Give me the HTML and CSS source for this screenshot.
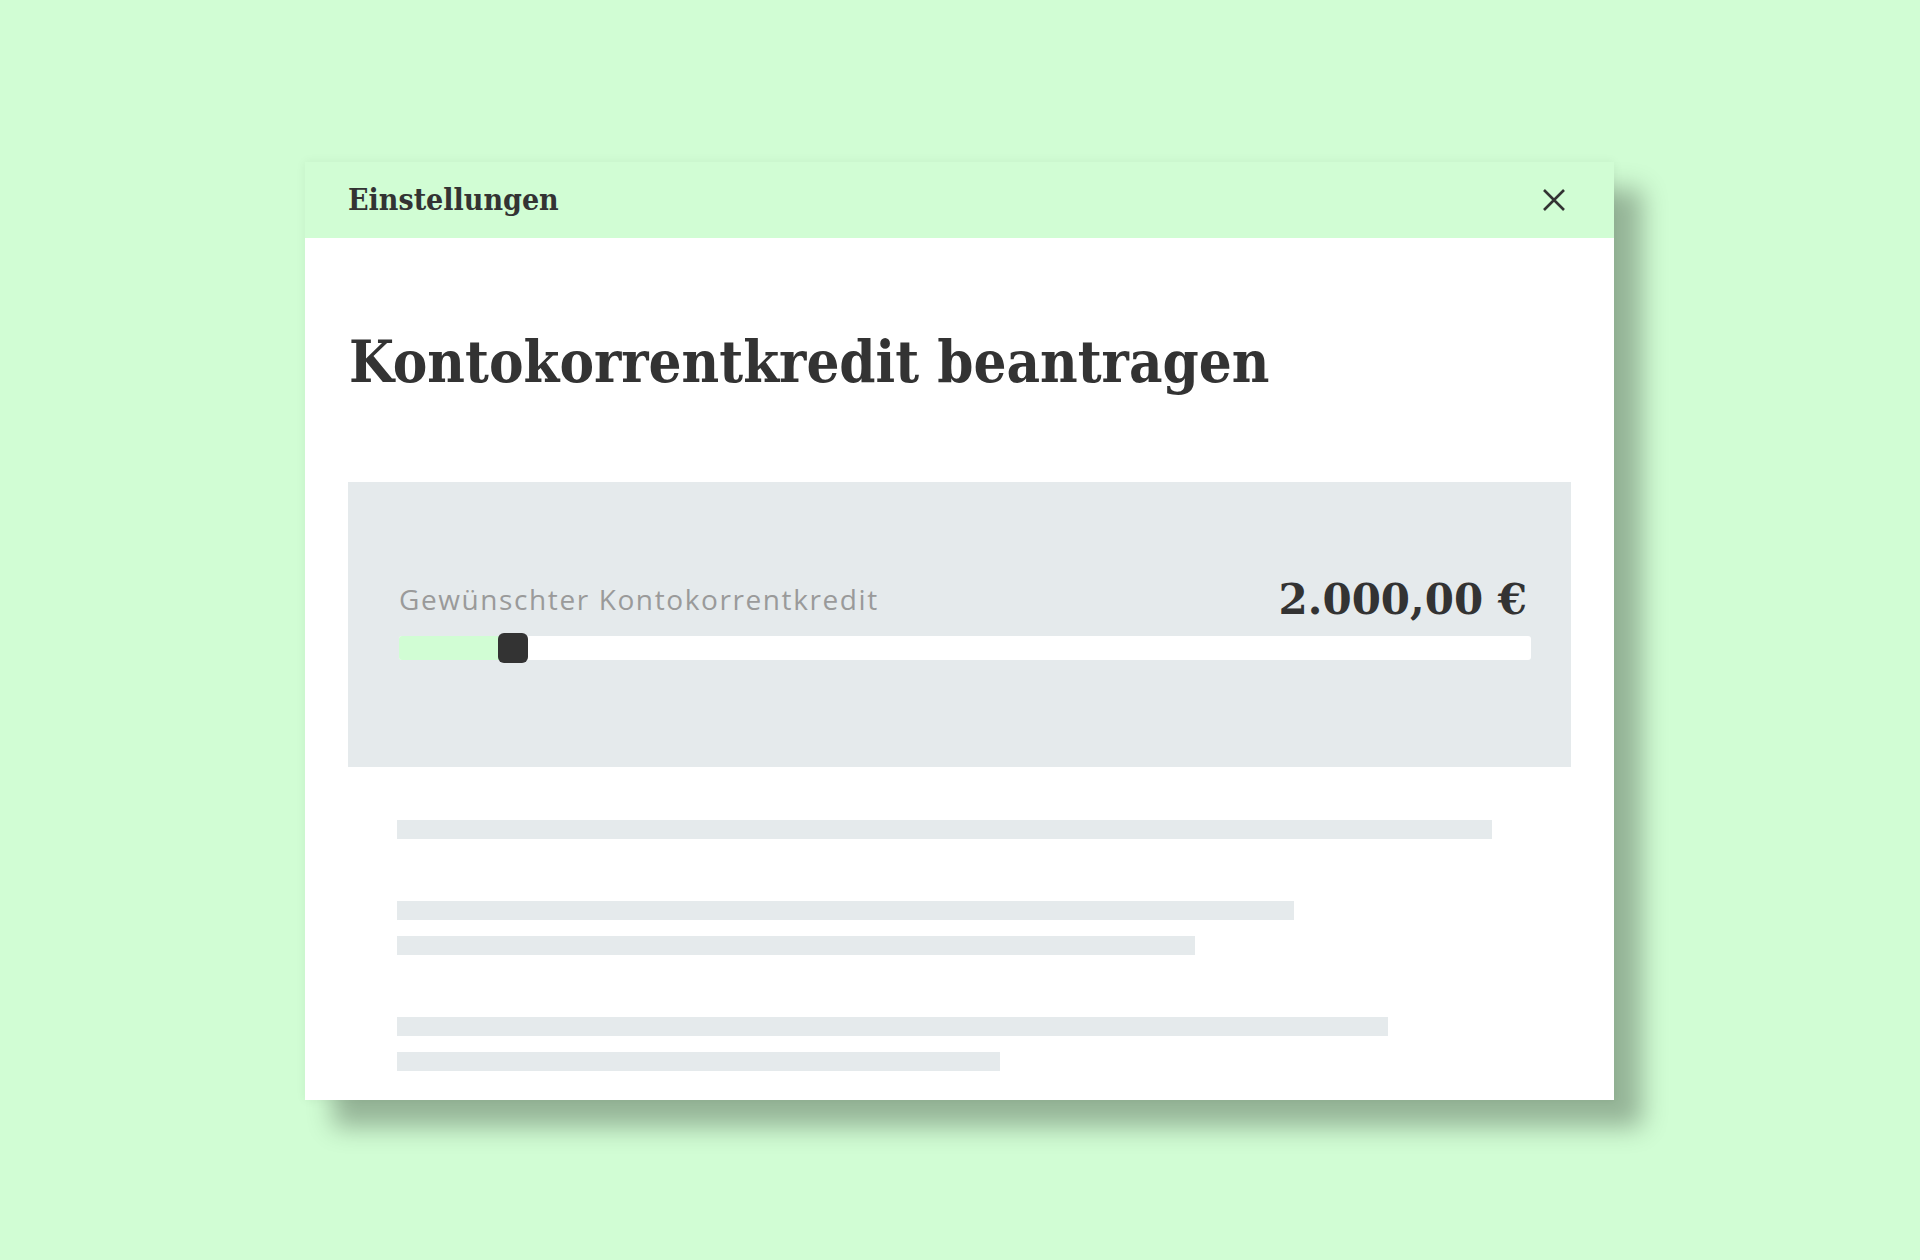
FILE: index.html
```html
<!DOCTYPE html>
<html lang="de">
<head>
<meta charset="utf-8">
<title>Einstellungen</title>
<link rel="stylesheet" href="styles.css">
</head>
<body>
<div class="modal">
  <div class="modal-header">
    <span class="modal-title">Einstellungen</span>
    <svg class="close" viewBox="0 0 24 24" width="24" height="24" aria-label="Schließen">
      <path d="M2 2 L22 22 M22 2 L2 22" stroke="#333" stroke-width="2.6" fill="none"/>
    </svg>
  </div>
  <div class="modal-body">
    <h1 class="page-title">Kontokorrentkredit beantragen</h1>
    <div class="slider-card">
      <div class="slider-row">
        <span class="slider-label">Gewünschter Kontokorrentkredit</span>
        <span class="slider-value">2.000,00 €</span>
      </div>
      <div class="track">
        <div class="fill" style="width: 101px"></div>
        <div class="thumb" style="left: 99px"></div>
      </div>
    </div>
    <div class="skeleton">
      <div class="group">
        <div class="bar" style="width: 1095px"></div>
      </div>
      <div class="group">
        <div class="bar" style="width: 897px"></div>
        <div class="bar" style="width: 798px"></div>
      </div>
      <div class="group">
        <div class="bar" style="width: 991px"></div>
        <div class="bar" style="width: 603px"></div>
      </div>
    </div>
  </div>
</div>
</body>
</html>
```

FILE: styles.css
```css
html, body {
  margin: 0;
  padding: 0;
}
body {
  background: #d1fdd4;
  width: 1920px;
  height: 1260px;
  overflow: hidden;
  font-family: "DejaVu Serif", serif;
  color: #333;
}
.modal {
  margin: 162px 0 0 305px;
  width: 1309px;
  height: 938px;
  background: #fff;
  box-shadow: 28px 27px 24px rgba(0, 0, 0, 0.29), 0 0 10px rgba(0, 0, 0, 0.06);
  display: flex;
  flex-direction: column;
}
.modal-header {
  height: 76px;
  background: #d1fdd4;
  display: flex;
  align-items: center;
  justify-content: space-between;
  padding: 0 48px 0 43px;
  flex-shrink: 0;
}
.modal-title {
  font-family: "DejaVu Serif Condensed", "DejaVu Serif", serif;
  font-stretch: condensed;
  font-weight: bold;
  font-size: 30px;
  line-height: 30px;
}
.close {
  display: block;
  width: 24px;
  height: 24px;
}
.modal-body {
  padding: 0 43px;
}
.page-title {
  margin: 92px 0 0 1px;
  font-family: "DejaVu Serif Condensed", "DejaVu Serif", serif;
  font-stretch: condensed;
  font-weight: bold;
  font-size: 57.6px;
  line-height: 64px;
}
.slider-card {
  margin-top: 88px;
  height: 285px;
  background: #e5eaec;
  padding: 0 40px 0 51px;
  box-sizing: border-box;
  display: flex;
  flex-direction: column;
}
.slider-row {
  margin-top: 96px;
  display: flex;
  justify-content: space-between;
  align-items: flex-end;
  height: 40px;
}
.slider-label {
  font-family: "Open Sans", sans-serif;
  font-size: 28px;
  line-height: 28px;
  letter-spacing: 1.6px;
  color: #9a9a9a;
  margin-bottom: 5px;
}
.slider-value {
  font-family: "DejaVu Serif", serif;
  font-weight: bold;
  font-size: 42px;
  line-height: 42px;
  margin-right: 4px;
  margin-bottom: -3px;
}
.track {
  position: relative;
  margin-top: 18px;
  height: 24px;
  background: #fff;
  border-radius: 3px;
}
.fill {
  height: 24px;
  background: #d1fdd4;
  border-radius: 3px 0 0 3px;
}
.thumb {
  position: absolute;
  top: -3px;
  width: 30px;
  height: 30px;
  background: #333;
  border-radius: 6px;
}
.skeleton {
  padding-left: 49px;
  margin-top: 53px;
  display: flex;
  flex-direction: column;
  gap: 62px;
}
.group {
  display: flex;
  flex-direction: column;
  gap: 16px;
}
.bar {
  height: 19px;
  background: #e5eaec;
}
```
